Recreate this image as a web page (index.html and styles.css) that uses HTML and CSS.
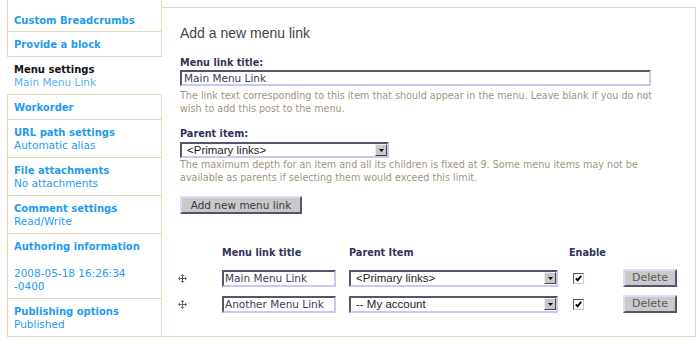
FILE: index.html
```html
<!DOCTYPE html>
<html lang="en">
<head>
<meta charset="utf-8">
<title>Add a new menu link</title>
<link rel="stylesheet" href="styles.css">
</head>
<body>
<div class="page">
  <ul class="tabs">
    <li class="tab tab-first"><a class="tab-title" href="#">Custom Breadcrumbs</a></li>
    <li class="tab"><a class="tab-title" href="#">Provide a block</a></li>
    <li class="tab tab-active"><span class="tab-title">Menu settings</span><span class="tab-sum">Main Menu Link</span></li>
    <li class="tab"><a class="tab-title" href="#">Workorder</a></li>
    <li class="tab"><a class="tab-title" href="#">URL path settings</a><span class="tab-sum">Automatic alias</span></li>
    <li class="tab"><a class="tab-title" href="#">File attachments</a><span class="tab-sum">No attachments</span></li>
    <li class="tab"><a class="tab-title" href="#">Comment settings</a><span class="tab-sum">Read/Write</span></li>
    <li class="tab"><a class="tab-title" href="#">Authoring information</a><span class="tab-sum tab-sum-spaced">2008-05-18 16:26:34 -0400</span></li>
    <li class="tab"><a class="tab-title" href="#">Publishing options</a><span class="tab-sum">Published</span></li>
  </ul>

  <div class="panel">
    <h2 class="panel-title">Add a new menu link</h2>

    <label class="field-label">Menu link title:</label>
    <input class="text-input text-input-wide" type="text" value="Main Menu Link">
    <div class="description">The link text corresponding to this item that should appear in the menu. Leave blank if you do not<br>wish to add this post to the menu.</div>

    <label class="field-label field-label-spaced">Parent item:</label>
    <div class="select select-top">
      <select><option>&lt;Primary links&gt;</option></select>
      <span class="select-arrow"><svg width="5" height="3" viewBox="0 0 5 3"><path d="M0 0h5L2.5 3z" fill="#000"/></svg></span>
    </div>
    <div class="description description-tight">The maximum depth for an item and all its children is fixed at 9. Some menu items may not be<br>available as parents if selecting them would exceed this limit.</div>

    <button class="btn btn-add" type="button">Add new menu link</button>

    <div class="menu-table">
      <div></div>
      <div class="th">Menu link title</div>
      <div class="th">Parent Item</div>
      <div class="th">Enable</div>
      <div></div>

      <div class="drag"><svg width="9" height="9" viewBox="0 0 9 9"><path d="M4.5 1.5v6M1.5 4.5h6" stroke="#666" stroke-width="1"/><path d="M4.5 0L2.5 2h4zM4.5 9L2.5 7h4zM0 4.5L2 2.5v4zM9 4.5L7 2.5v4z" fill="#666"/></svg></div>
      <input class="text-input text-input-row" type="text" value="Main Menu Link">
      <div class="select select-row">
        <select><option>&lt;Primary links&gt;</option></select>
        <span class="select-arrow"><svg width="5" height="3" viewBox="0 0 5 3"><path d="M0 0h5L2.5 3z" fill="#000"/></svg></span>
      </div>
      <span class="check"><svg width="7" height="7" viewBox="0 0 7 7"><path d="M0.8 3.4L2.6 5.4L6.2 0.9" stroke="#000" stroke-width="1.7" fill="none"/></svg></span>
      <button class="btn btn-delete" type="button">Delete</button>

      <div class="drag"><svg width="9" height="9" viewBox="0 0 9 9"><path d="M4.5 1.5v6M1.5 4.5h6" stroke="#666" stroke-width="1"/><path d="M4.5 0L2.5 2h4zM4.5 9L2.5 7h4zM0 4.5L2 2.5v4zM9 4.5L7 2.5v4z" fill="#666"/></svg></div>
      <input class="text-input text-input-row" type="text" value="Another Menu Link">
      <div class="select select-row">
        <select><option>-- My account</option></select>
        <span class="select-arrow"><svg width="5" height="3" viewBox="0 0 5 3"><path d="M0 0h5L2.5 3z" fill="#000"/></svg></span>
      </div>
      <span class="check"><svg width="7" height="7" viewBox="0 0 7 7"><path d="M0.8 3.4L2.6 5.4L6.2 0.9" stroke="#000" stroke-width="1.7" fill="none"/></svg></span>
      <button class="btn btn-delete" type="button">Delete</button>
    </div>
  </div>
</div>
</body>
</html>
```

FILE: styles.css
```css
* { box-sizing: border-box; }

body {
  margin: 0;
  background: #fff;
  font-family: "DejaVu Sans", Verdana, sans-serif;
  color: #333;
}

.page {
  display: flex;
  align-items: stretch;
  padding: 0 7px 0 7px;
}

/* ---------- vertical tabs ---------- */
.tabs {
  list-style: none;
  margin: 0;
  padding: 0;
  width: 155px;
  flex: none;
}

.tab {
  border: 1px solid #ddd9b9;
  border-top: 0;
  padding: 6px 6px 4.5px 6px;
  line-height: 13.3px;
  background: #fff;
}

.tab-first { padding-top: 13.5px; }

.tab-active {
  border-left-color: transparent;
  border-right-color: transparent;
}

.tab-title {
  display: block;
  font-weight: bold;
  font-size: 10px;
  color: #1f9bf0;
  text-decoration: none;
}

.tab-sum {
  display: block;
  font-size: 10.5px;
  color: #1f9bf0;
}

.tab-sum-spaced { margin-top: 13.3px; }

.tab-active .tab-title { color: #111; }
.tab-active .tab-sum { color: #56b3f3; }

/* ---------- panel ---------- */
.panel {
  flex: 1;
  margin-top: 7px;
  border: 1px solid #ddd9b9;
  border-left: 0;
  padding: 0 18px;
}

.panel-title {
  margin: 16px 0 0 0;
  font-family: "Liberation Sans", Arial, sans-serif;
  font-weight: normal;
  font-size: 14px;
  line-height: 18px;
  color: #444;
}

.field-label {
  display: block;
  margin-top: 13.5px;
  font-weight: bold;
  font-size: 9.7px;
  line-height: 13px;
  color: #33335a;
}

.field-label-spaced { margin-top: 12px; }

.text-input {
  display: block;
  height: 16px;
  margin: 1.5px 0 0 0;
  padding: 0 2px;
  border: 2px solid;
  border-color: #55556a #c8c8f5 #c8c8f5 #55556a;
  background: #fff;
  font-family: "DejaVu Sans", Verdana, sans-serif;
  font-size: 10.5px;
  color: #3c3c50;
  outline: none;
}

.text-input-wide { width: 471px; }

.text-input-row {
  width: 114px;
  height: 17px;
  margin: 0;
  padding: 0 1px;
}

.description {
  margin-top: 2.5px;
  font-size: 9.6px;
  line-height: 13px;
  color: #a09680;
  white-space: nowrap;
}

.description-tight { margin-top: 0; }

/* ---------- select ---------- */
.select {
  display: flex;
  align-items: center;
  width: 209px;
  height: 16px;
  border: 2px solid;
  border-color: #55556a #c8c8f5 #c8c8f5 #55556a;
  background: #fff;
}

.select-top { margin-top: 2.5px; }

.select-row { height: 17px; }

.select select {
  flex: 1;
  min-width: 0;
  height: 100%;
  appearance: none;
  -webkit-appearance: none;
  border: 0;
  background: transparent;
  padding: 0 0 0 5px;
  font-family: "Liberation Sans", Arial, sans-serif;
  font-size: 11.5px;
  color: #222;
  outline: none;
}

.select-arrow {
  flex: none;
  width: 12px;
  height: 12px;
  display: flex;
  align-items: center;
  justify-content: center;
  background: #c8c8c8;
  border: 1px solid;
  border-color: #eeeeee #444 #444 #eeeeee;
}

.select-arrow svg { display: block; }

/* ---------- buttons ---------- */
.btn {
  display: block;
  height: 18px;
  padding: 0 8px;
  border: 2px solid;
  border-color: #dcdcf8 #55556a #55556a #dcdcf8;
  background: #c9c9c9;
  font-family: "DejaVu Sans", Verdana, sans-serif;
  font-size: 10.5px;
  line-height: 14px;
  color: #3a3a3a;
}

.btn-add {
  margin-top: 12px;
  width: 122px;
}

.btn-delete {
  width: 54px;
  padding: 0;
  font-size: 11px;
  color: #5a5a5a;
}

/* ---------- table ---------- */
.menu-table {
  display: grid;
  grid-template-columns: 42px 127px 220px 54px 54px;
  grid-auto-rows: 26px;
  align-items: center;
  margin-top: 25px;
}

.th {
  font-weight: bold;
  font-size: 9.7px;
  line-height: 13px;
  color: #33335a;
}

.drag {
  display: flex;
  align-items: center;
  margin-left: -2px;
}

.drag svg { display: block; }

.check {
  display: flex;
  align-items: center;
  justify-content: center;
  width: 11px;
  height: 11px;
  margin-left: 4px;
  border: 1px solid;
  border-color: #55556a #c8c8f5 #c8c8f5 #55556a;
  background: #fff;
}

.check svg { display: block; }
```
